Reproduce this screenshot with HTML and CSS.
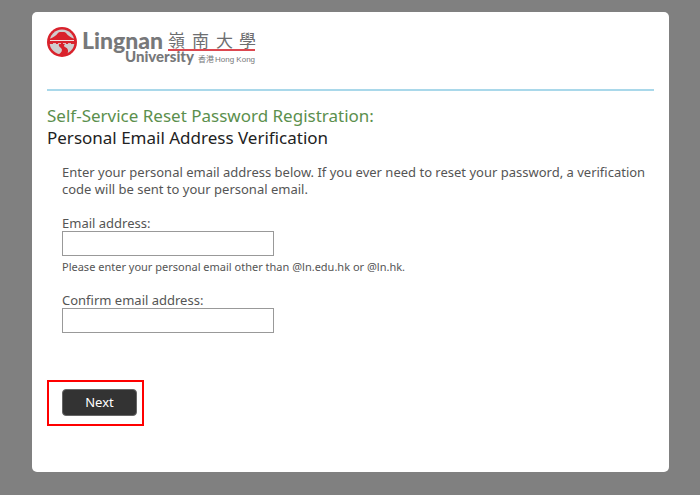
FILE: index.html
```html
<!DOCTYPE html>
<html lang="en">
<head>
    <meta charset="UTF-8">
    <meta name="viewport" content="width=device-width, initial-scale=1.0">
    <title>Self-Service Reset Password Registration</title>
    <link rel="stylesheet" href="styles.css">
</head>
<body>
    <main class="container">
        <header class="header">
            <svg class="logo" width="212" height="40" viewBox="0 0 212 40" role="img" aria-label="Lingnan University">
                <!-- emblem -->
                <circle cx="15" cy="15" r="15" fill="#d9222c"/>
                <circle cx="15" cy="15" r="12.5" fill="#cfcdce"/>
                <path d="M2 12 Q8 10 11 6 Q12 5 13 5 H17 Q18 5 19 6 Q22 10 28 12 V17 H2 Z" fill="#d9222c"/>
                <path d="M3 13.5 H27" stroke="#f3dfe0" stroke-width="1"/>
                <path d="M6 16.5 H9 M11 16.5 H14 M16 16.5 H19 M21 16.5 H24" stroke="#e3b4b7" stroke-width="1"/>
                <path d="M12 17 H18 Q16 19 18 20 Q23 22 20 28 Q15 30 11 28 Q17 24 14 21 Q11 19 12 17 Z" fill="#d9222c"/>
                <!-- wordmark -->
                <text class="logo-name" x="35" y="22">Lingnan</text>
                <text class="logo-sub" x="78" y="35">University</text>
                <text class="logo-zh" x="121 145 169 192" y="20">嶺南大學</text>
                <path d="M121 23 H208" stroke="#dc4850" stroke-width="2"/>
                <text class="logo-hk-zh" x="151" y="35">香港</text>
                <text class="logo-hk" x="168" y="35">Hong Kong</text>
            </svg>
        </header>
        <h1>Self-Service Reset Password Registration:</h1>
        <h2>Personal Email Address Verification</h2>
        <form class="email-form">
            <p class="intro">Enter your personal email address below. If you ever need to reset your password, a verification code will be sent to your personal email.</p>
            <div class="field">
                <label for="email">Email address:</label>
                <input type="email" id="email" name="email" aria-describedby="email-hint">
                <p class="hint" id="email-hint">Please enter your personal email other than @ln.edu.hk or @ln.hk.</p>
            </div>
            <div class="field">
                <label for="confirm-email">Confirm email address:</label>
                <input type="email" id="confirm-email" name="confirm-email">
            </div>
            <div class="highlight">
                <button type="submit" class="next-btn">Next</button>
            </div>
        </form>
    </main>
</body>
</html>
```
FILE: styles.css
```css
body {
    font-family: "Noto Sans", "Open Sans", sans-serif;
    font-size: 13px;
    line-height: 17px;
    color: #555;
    margin: 0;
    padding: 12px 31px 23px 32px;
    background-color: #808080;
}
.container {
    background-color: #fff;
    border-radius: 5px;
    padding: 15px 15px 46px;
}
.header {
    border-bottom: 2px solid #a9d8ea;
    padding-bottom: 22px;
    margin-bottom: 14px;
}
.logo {
    display: block;
}
.logo-name {
    font: 900 23px Lato, sans-serif;
    fill: #77787a;
}
.logo-sub {
    font: 900 15px Lato, sans-serif;
    fill: #77787a;
}
.logo-zh {
    font: 17px "Noto Sans CJK TC", sans-serif;
    fill: #6d6e70;
}
.logo-hk-zh {
    font: 8px "Noto Sans CJK TC", sans-serif;
    fill: #77787a;
}
.logo-hk {
    font: 8px "Liberation Sans", sans-serif;
    fill: #77787a;
}
h1,
h2 {
    font-size: 17px;
    font-weight: normal;
    line-height: 22px;
    margin: 0;
}
h1 {
    color: #5b8f4d;
}
h2 {
    color: #222;
}
.email-form {
    padding: 15px 0 0 15px;
}
.intro {
    margin: 0 0 18px;
}
.field {
    margin-bottom: 18px;
}
.field label {
    display: block;
    line-height: 15px;
}
.field input {
    display: block;
    box-sizing: border-box;
    width: 212px;
    height: 25px;
    border: 1px solid #999;
    padding: 2px 4px;
    font: inherit;
}
.hint {
    font-size: 11px;
    margin: 2px 0 0;
}
.highlight {
    display: inline-block;
    border: 2px solid #f00;
    padding: 7px 5px 8px 13px;
    margin: 29px 0 0 -15px;
}
.next-btn {
    display: block;
    width: 75px;
    height: 27px;
    border: 1px solid #666;
    border-radius: 4px;
    background-color: #333;
    color: #fff;
    font: inherit;
    cursor: pointer;
}
```
